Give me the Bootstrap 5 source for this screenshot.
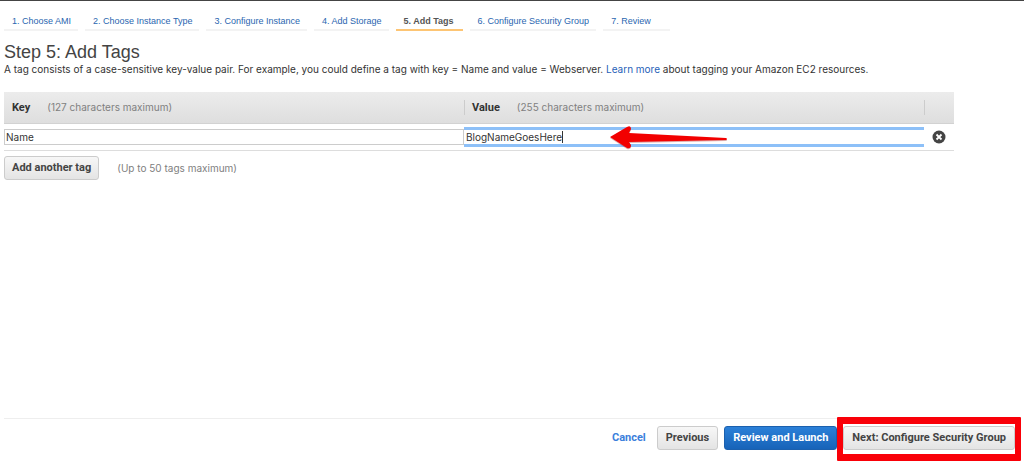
<!DOCTYPE html>
<html lang="en">
<head>
<meta charset="utf-8">
<meta name="viewport" content="width=device-width, initial-scale=1">
<title>Step 5: Add Tags</title>
<link rel="stylesheet" href="https://cdn.jsdelivr.net/npm/bootstrap@5.3.0/dist/css/bootstrap.min.css">
<style>
  body { font-family: Inter, "Liberation Sans", Arial, sans-serif; font-size: 10px; line-height: 16px; color: #333; background: #fff; border-top: 1px solid #444; }
  a { color: #1f5fb8; text-decoration: none; }
  .wizard { padding-top: 9px; gap: 7px; font-family: "Liberation Sans", Arial, sans-serif; font-size: 9px; }
  .wizard .nav-link { min-width: 67px; padding: 3px 7px 0 8px; color: #2a66b0; border-bottom: 2px solid #f3f3f3; }
  .wizard .nav-link.active { color: #555; font-weight: bold; border-bottom-color: #fdc574; }
  h1 { font-family: "Liberation Sans", Arial, sans-serif; font-size: 18px; line-height: 20px; margin: 11px 0 0; color: #444; }
  .intro { line-height: 14px; }
  .tag-area { margin-top: 16px; padding-right: 66px; }
  .tag-table { table-layout: fixed; border-bottom: 1px solid #ddd; }
  .tag-table thead { background: linear-gradient(#ececec, #dedede); }
  .tag-table th { height: 31px; padding: 0; border-bottom: 1px solid #d2d2d2; }
  .tag-table td { height: 27px; padding: 0; }
  .head-cell { height: 15px; line-height: 15px; padding-left: 8px; gap: 17px; }
  th + th .head-cell { border-left: 1px solid #ccc; padding-left: 7px; }
  .col-key { width: calc(50% - 16px); }
  .col-remove { width: 30px; }
  .hint { color: #808080; font-weight: normal; }
  .tag-input { height: 16px; padding: 0 1px; border: 1px solid #ccc; border-radius: 0; font-size: 10px; line-height: 14px; color: #333; }
  .tag-input.current { height: 20px; border: 0 solid #8dc0f8; border-width: 3px 0; padding-left: 2px; }
  .caret { left: 98px; top: 4px; width: 1px; height: 12px; background: #333; }
  .arrow { left: 145px; top: -3px; }
  .add-row { margin-top: 5px; gap: 18px; }
  .btn { --bs-btn-font-size: 11px; --bs-btn-font-weight: bold; --bs-btn-padding-x: 8px; --bs-btn-padding-y: 3px; --bs-btn-line-height: 16px; --bs-btn-border-radius: 3px; }
  .add-row .btn { --bs-btn-padding-x: 7px; }
  .btn, .head-cell label, .cancel { font-family: Roboto, "Liberation Sans", Arial, sans-serif; font-size: 11px; font-weight: bold; }
  .btn-plain { --bs-btn-color: #444; --bs-btn-border-color: #ccc; --bs-btn-hover-border-color: #aaa; background: linear-gradient(#f7f7f7, #e4e4e4); }
  .btn-launch { --bs-btn-color: #fff; --bs-btn-border-color: #1b60ae; --bs-btn-hover-color: #fff; background: linear-gradient(#2b80d8, #1763b8); }
  .actions { border-top: 1px solid #eee; padding: 7px 5px 14px 0; gap: 6px; }
  .cancel { color: #3c7fdc; margin-right: 5px; }
  .highlight { top: -9px; right: -6px; bottom: -11px; left: -6px; border: 7px solid #f90008; border-width: 7px 6px; border-radius: 1px; pointer-events: none; }
</style>
</head>
<body class="d-flex flex-column min-vh-100 px-1">
  <nav aria-label="Launch steps">
    <ul class="nav wizard">
      <li class="nav-item"><a class="nav-link" href="#">1. Choose AMI</a></li>
      <li class="nav-item"><a class="nav-link" href="#">2. Choose Instance Type</a></li>
      <li class="nav-item"><a class="nav-link" href="#">3. Configure Instance</a></li>
      <li class="nav-item"><a class="nav-link" href="#">4. Add Storage</a></li>
      <li class="nav-item"><a class="nav-link active" aria-current="step" href="#">5. Add Tags</a></li>
      <li class="nav-item"><a class="nav-link" href="#">6. Configure Security Group</a></li>
      <li class="nav-item"><a class="nav-link" href="#">7. Review</a></li>
    </ul>
  </nav>
  <main>
    <h1 class="fw-normal">Step 5: Add Tags</h1>
    <p class="intro mb-0">A tag consists of a case-sensitive key-value pair. For example, you could define a tag with key = Name and value = Webserver. <a href="#">Learn more</a> about tagging your Amazon EC2 resources.</p>
    <div class="tag-area">
      <table class="tag-table w-100">
        <thead>
          <tr>
            <th scope="col" class="col-key"><div class="head-cell d-flex"><label for="tag-key">Key</label><span class="hint">(127 characters maximum)</span></div></th>
            <th scope="col"><div class="head-cell d-flex"><label for="tag-value">Value</label><span class="hint">(255 characters maximum)</span></div></th>
            <th scope="col" class="col-remove"><div class="head-cell"></div></th>
          </tr>
        </thead>
        <tbody>
          <tr>
            <td><input class="tag-input d-block w-100" id="tag-key" type="text" value="Name"></td>
            <td>
              <div class="position-relative">
                <input class="tag-input current d-block w-100" id="tag-value" type="text" value="BlogNameGoesHere">
                <span class="caret position-absolute"></span>
                <svg class="arrow position-absolute" width="120" height="27" viewBox="0 0 120 27" aria-hidden="true">
                  <path d="M1 13L18 3Q22 1 22 5L20 9L117 14Q119 15 117 16L20 18L22 21Q22 25 18 24Z" fill="#a33" opacity=".4" transform="translate(0 1)"/>
                  <path d="M1 13L18 3Q22 1 22 5L20 9L117 14Q119 15 117 16L20 18L22 21Q22 25 18 24Z" fill="#f20000"/>
                </svg>
              </div>
            </td>
            <td class="text-center">
              <button class="border-0 bg-transparent p-0 d-flex mx-auto" type="button" aria-label="Remove tag">
                <svg width="14" height="14" viewBox="0 0 14 14"><circle cx="7" cy="7" r="6.5" fill="#444"/><path d="M4.5 4.5l5 5M9.5 4.5l-5 5" stroke="#fff" stroke-width="1.8"/></svg>
              </button>
            </td>
          </tr>
        </tbody>
      </table>
      <div class="add-row d-flex align-items-center">
        <button class="btn btn-plain" type="button">Add another tag</button>
        <span class="hint">(Up to 50 tags maximum)</span>
      </div>
    </div>
  </main>
  <footer class="actions d-flex justify-content-end align-items-center mt-auto">
    <a class="cancel" href="#">Cancel</a>
    <button class="btn btn-plain" type="button">Previous</button>
    <button class="btn btn-launch" type="button">Review and Launch</button>
    <div class="position-relative">
      <button class="btn btn-plain" type="button">Next: Configure Security Group</button>
      <span class="highlight position-absolute"></span>
    </div>
  </footer>
<script src="https://cdn.jsdelivr.net/npm/bootstrap@5.3.0/dist/js/bootstrap.bundle.min.js"></script>
</body>
</html>
